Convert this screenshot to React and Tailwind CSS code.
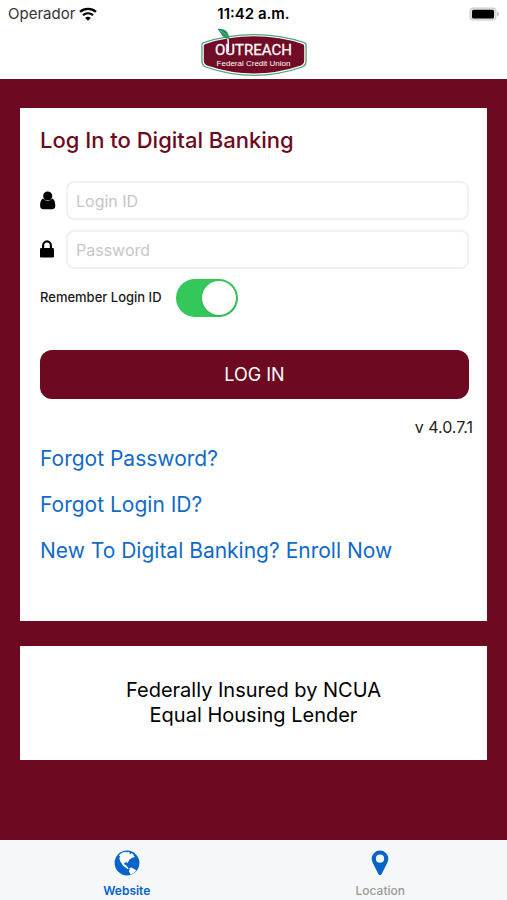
import { useState } from "react";

function WifiIcon() {
  return (
    <svg viewBox="0 0 18 14" className="h-3.5 w-[18px]" fill="none" stroke="#000" strokeWidth="2.3">
      <path d="M1 4.9C5.5.9 12.5.9 17 4.9" />
      <path d="M3.9 8.2c3-2.5 7.2-2.5 10.2 0" />
      <path d="M9 13.7 6.2 10.9c1.600-1.400 4-1.400 5.600 0z" fill="#000" stroke="none" />
    </svg>
  );
}

function BatteryIcon() {
  return (
    <svg viewBox="0 0 31 14" className="h-3.5 w-[31px]">
      <rect x="1.5" y="0.5" width="27" height="13" rx="4" fill="#c9c9c9" />
      <rect x="2.5" y="1.5" width="25" height="11" rx="3" fill="#e4e4e4" />
      <rect x="4" y="2.7" width="22" height="8.8" rx="1.5" fill="#000" />
      <path d="M29.300 4.800c2.200.9 2.200 3.500 0 4.400z" fill="#b5b5b5" />
    </svg>
  );
}

function Logo() {
  return (
    <svg viewBox="0 0 108 48" className="h-12 w-[108px]" role="img" aria-label="Outreach Federal Credit Union">
      <path d="M3.5 14Q28 6 54 6t50.500 8q2.200.7 2.200 3v16q0 5-4.200 6.500Q78 48 54 48T5.500 39.500Q1.300 38 1.300 33V17q0-2.300 2.200-3z" fill="#4fa377" />
      <path d="M4.5 15Q28 7.200 54 7.200T103.500 15q1.900.6 1.900 2.300v15.500q0 4-3.600 5.600Q78 46.700 54 46.700T6.200 38.400q-3.600-1.600-3.600-5.600V17.300q0-1.700 1.900-2.300z" fill="#fff" />
      <path d="M5.5 16Q28 8.300 54 8.300T102.500 16q1.700.5 1.700 2v14.800q0 3.200-3.200 4.700Q77 45.500 54 45.500T7 37.500q-3.200-1.500-3.200-4.700V18q0-1.500 1.700-2z" fill="#710c26" />
      <path d="M28.300 24V15Q28.300 9 25 5" fill="none" stroke="#fff" strokeWidth="1.500" />
      <path d="M17.5 1c6-.8 11 1.700 12 9.700C22.500 11 22 6 17.500 1z" fill="#23915b" />
      <path d="M20 2.500q5 2.500 8 7" fill="none" stroke="#8ccba9" strokeWidth="0.6" />
      <text
        x="53.500"
        y="27"
        textAnchor="middle"
        fill="#fff"
        stroke="#fff"
        strokeWidth="0.3"
        fontSize="15"
        fontFamily="Roboto, sans-serif"
      >
        OUTREACH
      </text>
      <text x="53.500" y="38" textAnchor="middle" fill="#fff" fontSize="8" fontFamily="'Liberation Sans', sans-serif">
        Federal Credit Union
      </text>
    </svg>
  );
}

function UserIcon() {
  return (
    <svg viewBox="0 0 16 19" className="h-[19px] w-4" fill="#000">
      <circle cx="7.7" cy="5" r="4.6" />
      <path d="M3.4 7.600C1.200 8.100.1 10.800.1 14.800c0 2.200 1.200 3.400 2.900 3.400h9.400c1.700 0 2.900-1.200 2.900-3.400 0-4-1.100-6.700-3.300-7.200-2.300 3.200-6.300 3.200-8.600 0z" />
    </svg>
  );
}

function LockIcon() {
  return (
    <svg viewBox="0 0 16 19" className="h-[19px] w-4">
      <path d="M3.1 9V5.600a3.900 4.200 0 0 1 7.800 0V9" fill="none" stroke="#000" strokeWidth="2.200" />
      <rect x="0" y="8" width="14" height="9.500" rx="1.300" fill="#000" />
    </svg>
  );
}

function GlobeIcon() {
  return (
    <svg viewBox="0 0 26 26" className="size-[26px]">
      <circle cx="13" cy="13" r="12.4" fill="#0563ca" />
      <path
        d="M5 5.200C7 3 9.600 1.900 12 1.700l1.600.9 1-.6 1.600.8-.9 1.200 1.500.2.700-1.300 2 1.600.3 1.500 1.200.9-1.500.6-1.700.2-.9 1.100-1.500.8-.4 1.500-1.200.8-.2 1.600-.9-1.200-2 .1-.5 1.700.7 1 1.300-.4.200 1.500 1.400.7.300 1.500 1 .6-1.500-.1-2.100-1.500-2.200-1.300-1.600-2.700-1.500-2.200-.8-2.600.6-2.200z"
        fill="#fff"
      />
      <path d="m15.300 18.200 1.800-.6 2.200.8 1.500 1.200 1.300.4-.9 1.800-2.200 1.700-2.500 1.200-.6-1.800-1-1.600.6-1.600z" fill="#fff" />
    </svg>
  );
}

function PinIcon() {
  return (
    <svg viewBox="0 0 18 26" className="h-[26px] w-[18px]" fill="#0563ca">
      <path
        fillRule="evenodd"
        d="M9 .5A8.300 8.300 0 0 0 .7 8.800c0 1.300.2 2.300.8 3.400l5.800 11.900c.7 1.400 2.700 1.400 3.400 0l5.800-11.900c.6-1.100.8-2.100.8-3.400A8.300 8.300 0 0 0 9 .5zm0 12.300a4.100 4.100 0 1 1 0-8.200 4.100 4.100 0 0 1 0 8.200z"
      />
    </svg>
  );
}

const links = ["Forgot Password?", "Forgot Login ID?", "New To Digital Banking? Enroll Now"];

function App() {
  const [loginId, setLoginId] = useState("");
  const [password, setPassword] = useState("");
  const [remember, setRemember] = useState(true);

  return (
    <div className="flex min-h-screen flex-col bg-[#6d0921] font-['Inter',sans-serif] text-black">
      <header className="bg-white pb-[3px]">
        <div className="grid h-7 grid-cols-3 items-center px-2">
          <div className="flex items-center gap-1 text-[15px] text-[#333]">
            Operador
            <WifiIcon />
          </div>
          <p className="text-center text-[15px] font-semibold">11:42 a.m.</p>
          <div className="flex justify-end">
            <BatteryIcon />
          </div>
        </div>
        <div className="flex justify-center">
          <Logo />
        </div>
      </header>

      <main className="flex flex-1 flex-col gap-[25px] px-5 pt-[29px]">
        <form className="bg-white pt-4 pr-[18px] pb-[54px] pl-5" onSubmit={(e) => e.preventDefault()}>
          <h1 className="text-[22px] leading-8 font-medium text-[#6d0921]">Log In to Digital Banking</h1>

          <div className="mt-[25px] flex flex-col gap-2.5">
            <div className="flex items-center gap-2.5">
              <label htmlFor="login" aria-label="Login ID">
                <UserIcon />
              </label>
              <input
                id="login"
                type="text"
                placeholder="Login ID"
                value={loginId}
                onChange={(e) => setLoginId(e.target.value)}
                className="h-[39px] min-w-0 flex-1 rounded-lg border-2 border-[#f1f1f1] px-2 text-base placeholder:text-[#c6c6c8]"
              />
            </div>
            <div className="flex items-center gap-2.5">
              <label htmlFor="password" aria-label="Password">
                <LockIcon />
              </label>
              <input
                id="password"
                type="password"
                placeholder="Password"
                value={password}
                onChange={(e) => setPassword(e.target.value)}
                className="h-[39px] min-w-0 flex-1 rounded-lg border-2 border-[#f1f1f1] px-2 text-base placeholder:text-[#c6c6c8]"
              />
            </div>
          </div>

          <label className="mt-2.5 flex items-center gap-3.5 text-[13px] font-medium text-[#1a1a1a]">
            Remember Login ID
            <span className="relative flex h-[38px] w-[62px]">
              <input
                type="checkbox"
                checked={remember}
                onChange={(e) => setRemember(e.target.checked)}
                className="peer h-full w-full appearance-none rounded-full bg-gray-200 checked:bg-[#34c759]"
              />
              <span className="pointer-events-none absolute top-0.5 left-0.5 size-[34px] rounded-full bg-white shadow peer-checked:right-0.5 peer-checked:left-auto" />
            </span>
          </label>

          <button type="submit" className="mt-[33px] h-[49px] w-full rounded-xl bg-[#6d0921] text-lg text-white">
            LOG IN
          </button>
          <p className="-mr-1 mt-4 text-right text-base leading-6 text-[#222]">v 4.0.7.1</p>

          <div className="mt-1 flex flex-col items-start gap-3.5">
            {links.map((link) => (
              <a key={link} href="#" className="text-[21px] leading-8 text-[#1169c9]">
                {link}
              </a>
            ))}
          </div>
        </form>

        <section className="bg-white px-5 py-8 text-center text-xl leading-[25px]">
          <p>Federally Insured by NCUA</p>
          <p>Equal Housing Lender</p>
        </section>
      </main>

      <nav className="grid h-[60px] grid-cols-2 bg-[#f6f7f8] text-xs font-medium">
        <a href="#" className="flex flex-col items-center pt-2.5 text-[#0563ca]">
          <GlobeIcon />
          <span className="mt-[7px] leading-4 font-semibold">Website</span>
        </a>
        <a href="#" className="flex flex-col items-center pt-2.5 text-[#9a9a9a]">
          <PinIcon />
          <span className="mt-[7px] leading-4">Location</span>
        </a>
      </nav>
    </div>
  );
}

export default App;
